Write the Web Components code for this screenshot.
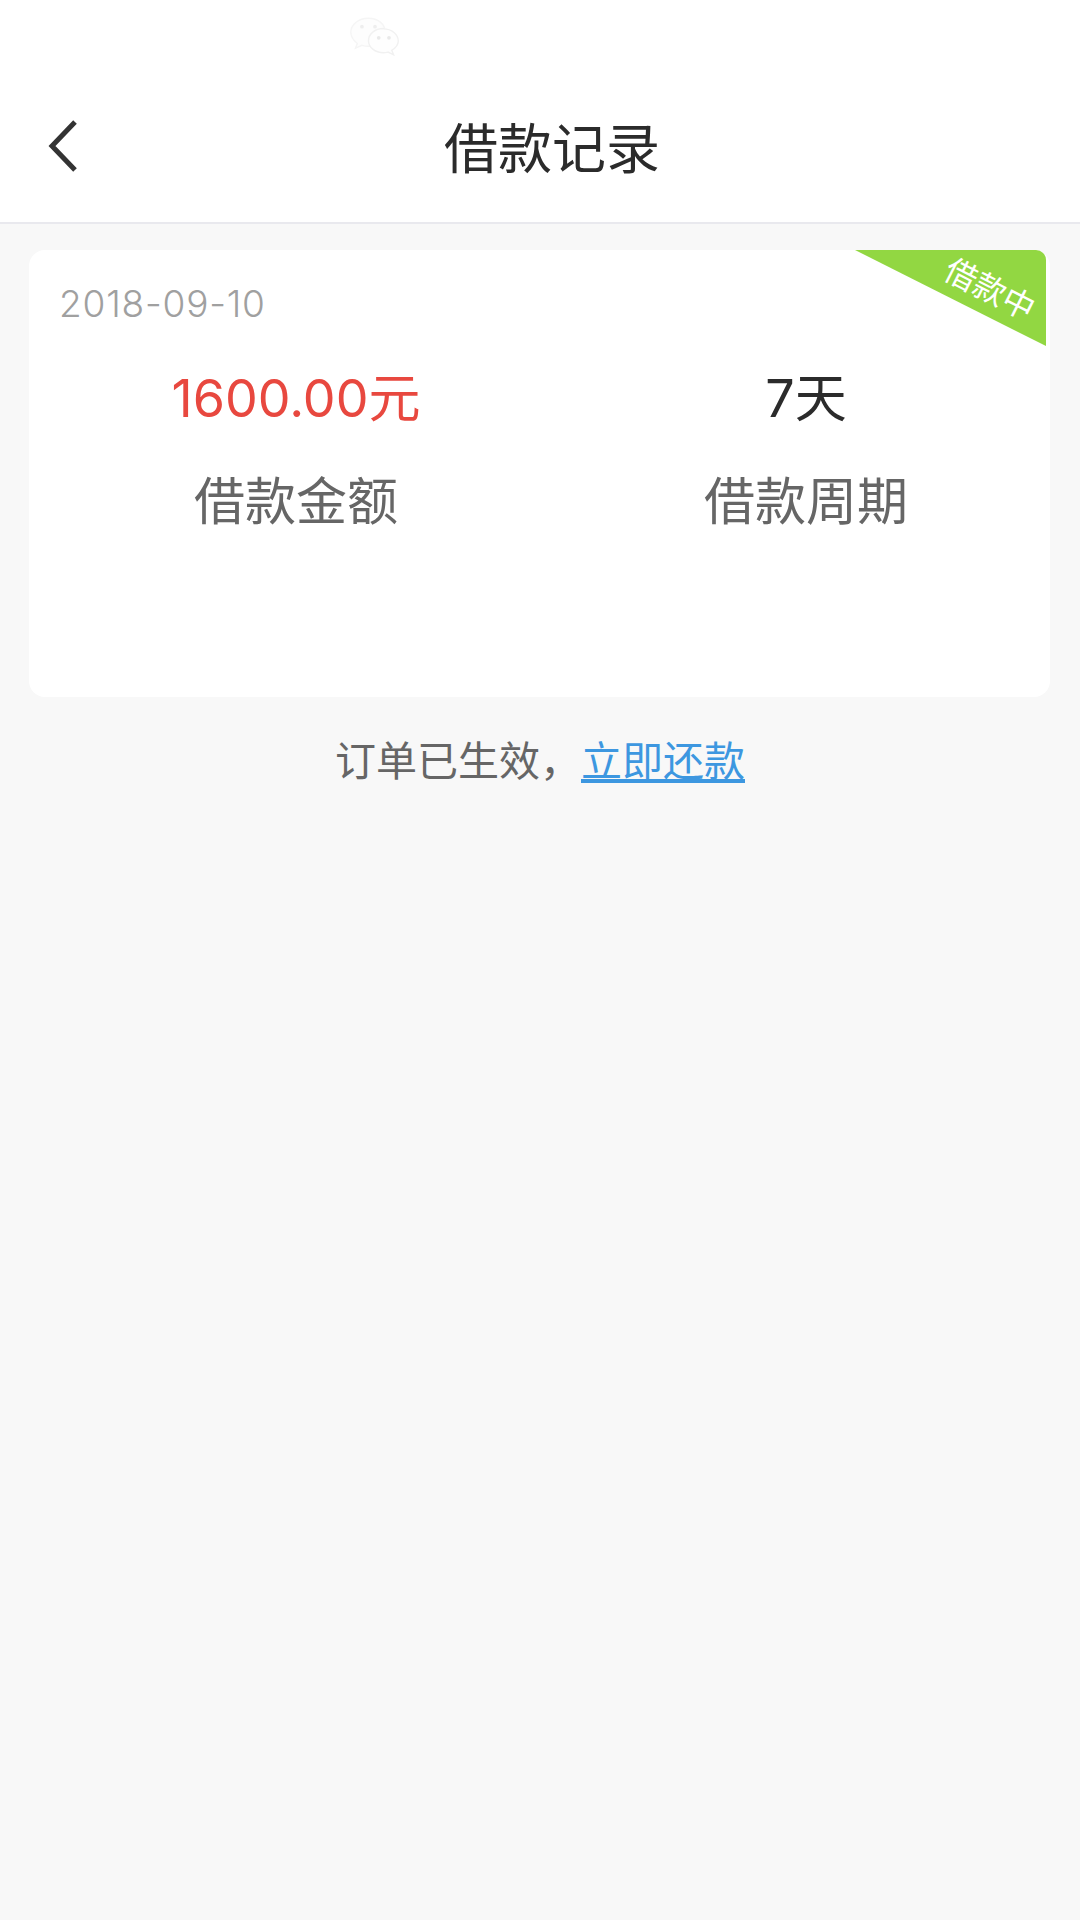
<!DOCTYPE html>
<html lang="zh">
<head>
<meta charset="utf-8">
<title>借款记录</title>
<style>
  html,body{margin:0;padding:0;background:#f8f8f8}
  body{width:1080px;height:1920px;font-family:"Noto Sans CJK SC","Noto Sans",sans-serif;overflow:hidden}
</style>
</head>
<body>
<app-header title="借款记录"></app-header>
<loan-card date="2018-09-10" amount="1600.00元" amount-label="借款金额" period="7天" period-label="借款周期" status="借款中"></loan-card>
<repay-note>订单已生效，<a slot="action">立即还款</a></repay-note>

<script>
(function () {
  var FONT = '"Noto Sans CJK SC","Noto Sans",sans-serif';
  var NUM = 'Inter,"Noto Sans CJK SC",sans-serif';

  class AppHeader extends HTMLElement {
    connectedCallback() {
      if (this.shadowRoot) return;
      var root = this.attachShadow({ mode: 'open' });
      root.innerHTML = `<style>
        :host{display:block;height:222px;background:#fff;border-bottom:2px solid #e9e9ee;box-sizing:content-box;
          font-family:${FONT}}
        .status{height:80px;display:flex;justify-content:flex-start;padding-left:348px}
        .status svg{margin-top:15px}
        .bar{height:142px;display:flex;align-items:center;position:relative;padding-left:46px}
        .back{display:block;flex:none;margin-bottom:10px}
        h1{margin:0;flex:1;text-align:center;font-weight:400;font-size:54px;line-height:1;color:#2b2b2b;
          padding-right:58px;position:relative;top:-5px}
      </style>
      <div class="status">
        <svg width="54" height="42" viewBox="0 0 58 44" aria-hidden="true">
          <path d="M22 3C11 3 3 10 3 18c0 5 3 9 7 12l-2 5 7-3c2 .6 4 1 7 1 8 0 18-6 18-15S32 3 22 3z" fill="#fdfdfd" stroke="#f5f5f5" stroke-width="1.5"/>
          <path d="M38 14c-9 0-16 6-16 13s7 13 16 13c2 0 3-.2 5-.7l6 3-2-5c4-2.500 7-6 7-10 0-7-7-13-16-13z" fill="#fefefe" stroke="#f1f1f1" stroke-width="1.500"/>
          <circle cx="15" cy="12" r="2" fill="#eeeeee"/><circle cx="29" cy="12" r="2" fill="#eeeeee"/>
          <circle cx="33" cy="24" r="2" fill="#e9e9e9"/><circle cx="44" cy="24" r="2" fill="#e9e9e9"/>
        </svg>
      </div>
      <div class="bar">
        <svg class="back" width="36" height="54" viewBox="0 0 36 54" aria-hidden="true">
          <path d="M29 3 6 27l23 24" fill="none" stroke="#333" stroke-width="5"/>
        </svg>
        <h1></h1>
      </div>`;
      root.querySelector('h1').textContent = this.getAttribute('title');
    }
  }

  class LoanCard extends HTMLElement {
    connectedCallback() {
      if (this.shadowRoot) return;
      var root = this.attachShadow({ mode: 'open' });
      root.innerHTML = `<style>
        :host{display:block;position:relative;box-sizing:border-box;width:1021px;height:447px;margin:26px 0 0 29px;
          background:#fff;border-radius:16px;font-family:${FONT}}
        .date{padding:32px 0 0 30px;font:300 37px/44px ${NUM};letter-spacing:.8px;color:#a0a0a0}
        .cols{display:grid;grid-template-columns:510px 510px;margin:47px 0 0 12px}
        .col{display:flex;flex-direction:column;align-items:center;gap:47px}
        .val{font:400 52px/52px ${NUM};color:#2b2b2b}
        .val.red{color:#e8483f}
        .lab{font-size:51px;line-height:52px;color:#666}
        .ribbon{position:absolute;top:0;right:4px;width:191px;height:96px}
        .ribbon i{position:absolute;inset:0;background:#92d742;border-top-right-radius:10px;clip-path:polygon(0 0,100% 0,100% 100%)}
        .ribbon span{position:absolute;left:81px;top:20px;width:110px;text-align:center;font-size:32px;line-height:34px;color:#fff;
          transform:rotate(27deg);white-space:nowrap}
      </style>
      <div class="date"></div>
      <div class="cols">
        <div class="col"><div class="val red" id="amount"></div><div class="lab" id="amountLabel"></div></div>
        <div class="col"><div class="val" id="period"></div><div class="lab" id="periodLabel"></div></div>
      </div>
      <div class="ribbon"><i></i><span></span></div>`;
      root.querySelector('.date').textContent = this.getAttribute('date');
      root.getElementById('amount').textContent = this.getAttribute('amount');
      root.getElementById('amountLabel').textContent = this.getAttribute('amount-label');
      root.getElementById('period').textContent = this.getAttribute('period');
      root.getElementById('periodLabel').textContent = this.getAttribute('period-label');
      root.querySelector('.ribbon span').textContent = this.getAttribute('status');
    }
  }

  class RepayNote extends HTMLElement {
    connectedCallback() {
      if (this.shadowRoot) return;
      var root = this.attachShadow({ mode: 'open' });
      root.innerHTML = `<style>
        :host{display:block;margin-top:36px;text-align:center;font:400 41px/50px ${FONT};color:#666}
        ::slotted(a){color:#3d97e0;text-decoration:underline;text-underline-offset:3px}
      </style><slot></slot><slot name="action"></slot>`;
    }
  }

  customElements.define('app-header', AppHeader);
  customElements.define('loan-card', LoanCard);
  customElements.define('repay-note', RepayNote);
})();
</script>
</body>
</html>
